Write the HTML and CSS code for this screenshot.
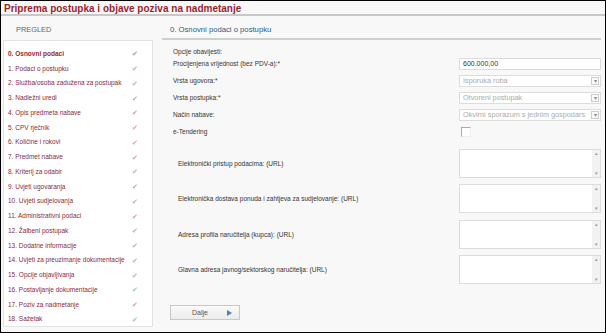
FILE: index.html
```html
<!DOCTYPE html>
<html>
<head>
<meta charset="utf-8">
<link rel="stylesheet" href="styles.css">
</head>
<body>
<div class="frame">
  <h1 class="title">Priprema postupka i objave poziva na nadmetanje</h1>
  <div class="main">
    <aside class="side">
      <div class="side-head">PREGLED</div>
      <ul class="nav">
        <li class="active"><span>0. Osnovni podaci</span><i class="ck ok">✔</i></li>
        <li><span>1. Podaci o postupku</span><i class="ck bad">✔</i></li>
        <li><span>2. Služba/osoba zadužena za postupak</span><i class="ck bad">✔</i></li>
        <li><span>3. Nadležni uredi</span><i class="ck ok">✔</i></li>
        <li><span>4. Opis predmeta nabave</span><i class="ck bad">✔</i></li>
        <li><span>5. CPV rječnik</span><i class="ck bad">✔</i></li>
        <li><span>6. Količine i rokovi</span><i class="ck bad">✔</i></li>
        <li><span>7. Predmet nabave</span><i class="ck bad">✔</i></li>
        <li><span>8. Kriterij za odabir</span><i class="ck ok">✔</i></li>
        <li><span>9. Uvjeti ugovaranja</span><i class="ck ok">✔</i></li>
        <li><span>10. Uvjeti sudjelovanja</span><i class="ck bad">✔</i></li>
        <li><span>11. Administrativni podaci</span><i class="ck bad">✔</i></li>
        <li><span>12. Žalbeni postupak</span><i class="ck ok">✔</i></li>
        <li><span>13. Dodatne informacije</span><i class="ck ok">✔</i></li>
        <li><span>14. Uvjeti za preuzimanje dokumentacije</span><i class="ck ok">✔</i></li>
        <li><span>15. Opcije objavljivanja</span><i class="ck bad">✔</i></li>
        <li><span>16. Postavljanje dokumentacije</span><i class="ck ok">✔</i></li>
        <li><span>17. Poziv za nadmetanje</span><i class="ck bad">✔</i></li>
        <li><span>18. Sažetak</span><i class="ck ok">✔</i></li>
      </ul>
    </aside>
    <section class="content">
      <div class="content-head">0. Osnovni podaci o postupku</div>
      <div class="form">
        <div class="row first"><label>Opcije obavijesti:</label></div>
        <div class="row"><label>Procijenjena vrijednost (bez PDV-a):*</label><div class="ctl input">600.000,00</div></div>
        <div class="row"><label>Vrsta ugovora:*</label><div class="ctl select"><span>Isporuka roba</span><b class="arrow">▾</b></div></div>
        <div class="row"><label>Vrsta postupka:*</label><div class="ctl select"><span>Otvoreni postupak</span><b class="arrow">▾</b></div></div>
        <div class="row"><label>Način nabave:</label><div class="ctl select"><span>Okvirni sporazum s jednim gospodars</span><b class="arrow">▾</b></div></div>
        <div class="row"><label>e-Tendering</label><div class="ctl-wrap"><div class="checkbox"></div></div></div>
        <div class="urls">
          <div class="trow"><label>Elektronički pristup podacima: (URL)</label><div class="ta"><b class="sb"><em>▴</em><em>▾</em></b></div></div>
          <div class="trow"><label>Elektronička dostava ponuda i zahtjeva za sudjelovanje: (URL)</label><div class="ta"><b class="sb"><em>▴</em><em>▾</em></b></div></div>
          <div class="trow"><label>Adresa profila naručitelja (kupca): (URL)</label><div class="ta"><b class="sb"><em>▴</em><em>▾</em></b></div></div>
          <div class="trow"><label>Glavna adresa javnog/sektorskog naručitelja: (URL)</label><div class="ta"><b class="sb"><em>▴</em><em>▾</em></b></div></div>
        </div>
        <div class="actions"><button class="btn"><span>Dalje</span><b class="tri"></b></button></div>
      </div>
    </section>
  </div>
</div>
</body>
</html>
```
FILE: styles.css
```css
* { box-sizing: border-box; }
html, body { margin: 0; padding: 0; }
body { font-family: "Liberation Sans", Arial, sans-serif; background: #fff; }
.frame {
  width: 606px; height: 333px; border: 1px solid #000; background: #f8f8f8;
  overflow: hidden; display: flex; flex-direction: column;
}
.title {
  margin: 0; padding: 2px 0 0 3px; height: 15px; font-size: 10px; font-weight: bold;
  color: #9c1f2e; border-bottom: 2px solid #c8c8c8; line-height: 11px;
}
.main { display: flex; flex: 1; padding: 0 4px 0 2px; }
.side { width: 150px; display: flex; flex-direction: column; }
.side-head { height: 24px; padding: 9px 0 0 13px; font-size: 7.4px; color: #666; line-height: 10px; }
.nav {
  list-style: none; margin: 0; padding: 5px 0 0 0; background: #fff;
  border: 1px solid #e2e2e2; flex: 1; margin-bottom: 5px;
}
.nav li {
  height: 14.75px; display: flex; align-items: center; justify-content: space-between;
  padding: 0 14px 0 4px; font-size: 6.5px; color: #8b2a3a; white-space: nowrap;
}
.nav li.active { font-weight: bold; color: #9c1f2e; }
.ck { font-style: normal; font-size: 7px; margin-top: 2px; flex: none; }
.ck.ok { color: #a6bf9c; }
.ck.bad { color: #d9a2ac; }
.content { flex: 1; display: flex; flex-direction: column; padding-left: 9px; }
.content-head {
  height: 24px; padding: 9px 0 0 8px; font-size: 7.7px; color: #2a5b8c; line-height: 10px;
  border-bottom: 2px solid #cfcfcf;
}
.form { padding: 7px 0 0 11px; font-size: 6.5px; color: #333; }
.row { display: flex; align-items: center; justify-content: space-between; height: 17px; }
.row.first { height: 8px; align-items: flex-start; }
.row label { line-height: 10px; }
.ctl {
  width: 142px; height: 12px; border: 1px solid #dcdcdc; background: #fff;
  display: flex; align-items: center; padding-left: 3px; overflow: hidden; white-space: nowrap;
  font-size: 7px;
}
.input { color: #333; }
.select { color: #aaa; justify-content: space-between; padding-right: 1px; font-size: 7.3px; }
.select span { overflow: hidden; flex: 1; min-width: 0; }
.arrow {
  flex: none; width: 8px; height: 8px; border: 1px solid #ccc; font-size: 6px; color: #888;
  font-weight: normal; display: flex; align-items: center; justify-content: center; background: #fafafa;
}
.ctl-wrap { width: 142px; display: flex; }
.checkbox {
  width: 10px; height: 10px; margin-left: 2px; border: 1px solid #aaa; border-right-color: #eee;
  border-bottom-color: #eee; background: #fff;
}
.urls { padding-top: 6px; }
.trow {
  display: flex; align-items: center; justify-content: space-between; height: 35.3px;
  padding-left: 5px;
}
.ta {
  width: 142px; height: 29px; border: 1px solid #dcdcdc; background: #fff; position: relative;
}
.sb {
  position: absolute; right: 0; top: 0; bottom: 0; width: 8px; background: #f2f2f2;
  display: flex; flex-direction: column; justify-content: space-between; align-items: center;
  font-size: 5px; color: #999; font-weight: normal;
}
.sb em { font-style: normal; line-height: 7px; }
.actions { padding-top: 18px; }
.btn {
  width: 70px; height: 15px; border: 1px solid #c8c8c8; background: linear-gradient(#fafafa, #ececec);
  font-family: inherit; font-size: 7px; color: #555; display: flex; align-items: center;
  padding: 0 0 0 21px; margin-left: -3px;
}
.btn span { flex: 1; text-align: left; }
.tri {
  width: 0; height: 0; border-left: 5px solid #4a7fc0; border-top: 3px solid transparent;
  border-bottom: 3px solid transparent; margin-right: 7px;
}
```
